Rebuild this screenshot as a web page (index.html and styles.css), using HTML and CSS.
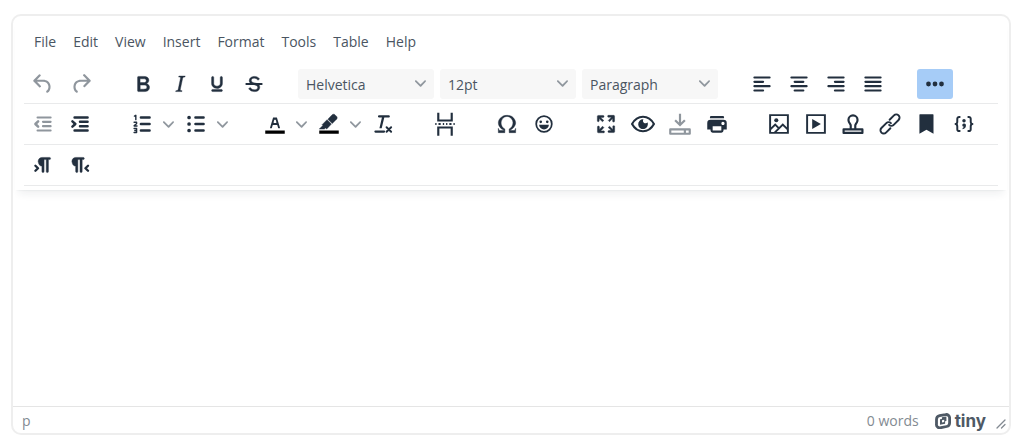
FILE: index.html
```html
<!DOCTYPE html>
<html lang="en">
<head>
<meta charset="utf-8">
<title>Rich text editor</title>
<link rel="stylesheet" href="styles.css">
</head>
<body>
<svg class="sprite" aria-hidden="true">
  <symbol id="chevron" viewBox="0 0 10 10"><path d="M8.7 2.2c.3-.3.8-.3 1 0 .4.4.4.9 0 1.2L5.7 7.8c-.3.3-.9.3-1.2 0L.2 3.4a.8.8 0 0 1 0-1.2c.3-.3.8-.3 1.1 0L5 6l3.7-3.8Z"/></symbol>
</svg>
<main class="editor">
  <header class="header">
    <nav class="menubar" aria-label="Menu">
      <button class="menu">File</button>
      <button class="menu">Edit</button>
      <button class="menu">View</button>
      <button class="menu">Insert</button>
      <button class="menu">Format</button>
      <button class="menu">Tools</button>
      <button class="menu">Table</button>
      <button class="menu">Help</button>
    </nav>

    <div class="toolbar toolbar-main" role="toolbar" aria-label="Formatting">
      <div class="group">
        <button class="tool" aria-label="Undo" disabled><svg class="icon" viewBox="0 0 24 24"><path d="M6.400 8H12c3.700 0 6.200 2 6.800 5.100.6 2.700-.4 5.600-2.300 6.800a1 1 0 0 1-1-1.800c1.100-.6 1.800-2.700 1.400-4.600-.5-2.100-2.100-3.500-4.900-3.500H6.400l3.300 3.300a1 1 0 1 1-1.400 1.400l-5-5a1 1 0 0 1 0-1.400l5-5a1 1 0 0 1 1.400 1.400L6.400 8Z"/></svg></button>
        <button class="tool" aria-label="Redo" disabled><svg class="icon" viewBox="0 0 24 24"><path d="M17.600 10H12c-2.800 0-4.400 1.400-4.900 3.500-.4 2 .3 4 1.400 4.600a1 1 0 1 1-1 1.800c-2-1.200-2.900-4.100-2.300-6.800.6-3 3-5.100 6.800-5.100h5.600l-3.300-3.300a1 1 0 1 1 1.400-1.400l5 5a1 1 0 0 1 0 1.400l-5 5a1 1 0 0 1-1.400-1.400l3.300-3.300Z"/></svg></button>
      </div>
      <div class="group">
        <button class="tool" aria-label="Bold"><svg class="icon" viewBox="0 0 24 24"><path class="heavy" fill-rule="evenodd" d="M7.8 19c-.3 0-.5 0-.6-.2l-.2-.5V5.7c0-.2 0-.4.2-.5l.6-.2h5c1.5 0 2.7.3 3.5 1 .7.6 1.1 1.4 1.1 2.5a3 3 0 0 1-.6 1.9c-.4.6-1 1-1.6 1.200.4.1.9.3 1.300.6s.8.7 1 1.200c.4.4.5 1 .5 1.600 0 1.300-.4 2.300-1.300 3-.8.7-2.100 1-3.800 1H7.800Zm5-8.300c.6 0 1.200-.1 1.600-.5.4-.3.6-.7.6-1.300 0-1.100-.8-1.700-2.300-1.700H9.300v3.500h3.400Zm.5 6c.7 0 1.300-.1 1.700-.4.4-.4.6-.9.6-1.500s-.2-1-.7-1.400c-.4-.3-1-.4-2-.4H9.400v3.800h4Z"/></svg></button>
        <button class="tool" aria-label="Italic"><svg class="icon" viewBox="0 0 24 24"><path class="heavy" d="m16.7 4.7-.1.9h-.3c-.6 0-1 0-1.4.3-.3.3-.4.6-.5 1.1l-2.1 9.800v.6c0 .5.4.8 1.400.8h.2l-.2.8H8l.2-.8h.2c1.100 0 1.800-.5 2-1.500l2-9.800.1-.5c0-.6-.4-.8-1.400-.8h-.3l.2-.9h5.800Z"/></svg></button>
        <button class="tool" aria-label="Underline"><svg class="icon" viewBox="0 0 24 24"><path class="heavy" d="M16 5c.6 0 1 .4 1 1v5.500a4 4 0 0 1-.4 1.800l-1 1.400a5.300 5.300 0 0 1-5.500 1 5 5 0 0 1-1.600-1c-.5-.4-.8-.9-1.100-1.400a4 4 0 0 1-.4-1.800V6c0-.6.4-1 1-1s1 .4 1 1v5.500c0 .3 0 .6.2 1l.6.7a3.300 3.300 0 0 0 2.200.8 3.400 3.400 0 0 0 2.200-.8c.3-.2.4-.5.6-.8l.2-.9V6c0-.6.4-1 1-1ZM8 17h8c.6 0 1 .4 1 1s-.4 1-1 1H8a1 1 0 0 1 0-2Z"/></svg></button>
        <button class="tool" aria-label="Strikethrough"><svg class="icon" viewBox="0 0 24 24"><path class="heavy" d="M15.600 8.500c-.5-.7-1-1.100-1.300-1.300-.6-.4-1.300-.6-2-.6-2.700 0-2.800 1.700-2.800 2.100 0 1.600 1.800 2 3.200 2.300 4.400.9 4.600 2.800 4.600 3.900 0 1.400-.7 4.100-5 4.100A6.200 6.200 0 0 1 7 16.400l1.500-1.100c.4.6 1.600 2 3.700 2 1.600 0 2.500-.4 3-1.200.4-.8.3-2-.8-2.600-.7-.4-1.600-.7-2.900-1-1-.2-3.900-.8-3.900-3.600C7.600 6 10.300 5 12.400 5c2.900 0 4.200 1.600 4.700 2.400l-1.500 1.100Z"/><path d="M5 11h14a1 1 0 0 1 0 2H5a1 1 0 0 1 0-2Z"/></svg></button>
      </div>
      <div class="group group-selects">
        <div class="picker"><select class="select" aria-label="Font"><option>Helvetica</option></select><svg class="chevron"><use href="#chevron"/></svg></div>
        <div class="picker"><select class="select" aria-label="Font size"><option>12pt</option></select><svg class="chevron"><use href="#chevron"/></svg></div>
        <div class="picker"><select class="select" aria-label="Block format"><option>Paragraph</option></select><svg class="chevron"><use href="#chevron"/></svg></div>
      </div>
      <div class="group">
        <button class="tool" aria-label="Align left"><svg class="icon line" viewBox="0 0 24 24"><path d="M5 6h14M5 10h8M5 14h14M5 18h8"/></svg></button>
        <button class="tool" aria-label="Align center"><svg class="icon line" viewBox="0 0 24 24"><path d="M5 6h14M8 10h8M5 14h14M8 18h8"/></svg></button>
        <button class="tool" aria-label="Align right"><svg class="icon line" viewBox="0 0 24 24"><path d="M5 6h14M11 10h8M5 14h14M11 18h8"/></svg></button>
        <button class="tool" aria-label="Justify"><svg class="icon line" viewBox="0 0 24 24"><path d="M5 6h14M5 10h14M5 14h14M5 18h14"/></svg></button>
      </div>
      <div class="group">
        <button class="tool tool-active" aria-label="More" aria-pressed="true"><svg class="icon" viewBox="0 0 24 24"><circle cx="6" cy="12" r="2.200"/><circle cx="12" cy="12" r="2.200"/><circle cx="18" cy="12" r="2.200"/></svg></button>
      </div>
    </div>

    <div class="toolbar" role="toolbar" aria-label="Insert and view">
      <div class="group">
        <button class="tool" aria-label="Decrease indent" disabled><svg class="icon line" viewBox="0 0 24 24"><path d="M7 6h12M12 10h7M12 14h7M7 18h12"/><path class="bold" d="M7.500 9.500 5 12l2.500 2.500"/></svg></button>
        <button class="tool" aria-label="Increase indent"><svg class="icon line" viewBox="0 0 24 24"><path class="bold" d="M7 6h12M12 10h7M12 14h7M7 18h12M5 9.500 7.700 12 5 14.500"/></svg></button>
      </div>
      <div class="group">
        <div class="split">
          <button class="tool" aria-label="Numbered list"><svg class="icon line" viewBox="0 0 24 24"><path class="bold" d="M11 6h8M11 12h8M11 18h8"/><path class="thin" d="M5 4.700 6.300 4v4M4.700 10.400H7v1.400l-2.200 1.600v.4h2.600M4.700 16.200H7v3.600H4.700M5.400 18H7"/></svg></button>
          <button class="split-arrow" aria-label="Numbered list styles"><svg class="chevron"><use href="#chevron"/></svg></button>
        </div>
        <div class="split">
          <button class="tool" aria-label="Bullet list"><svg class="icon line" viewBox="0 0 24 24"><path class="bold" d="M11.500 6H19M11.500 12H19M11.500 18H19"/><path class="solid" d="M3.900 6a1.700 1.700 0 1 1 3.400 0 1.700 1.700 0 0 1-3.400 0Zm0 6a1.700 1.700 0 1 1 3.400 0 1.700 1.700 0 0 1-3.400 0Zm0 6a1.700 1.700 0 1 1 3.400 0 1.700 1.700 0 0 1-3.400 0Z"/></svg></button>
          <button class="split-arrow" aria-label="Bullet list styles"><svg class="chevron"><use href="#chevron"/></svg></button>
        </div>
      </div>
      <div class="group">
        <div class="split">
          <button class="tool" aria-label="Text color"><svg class="icon" viewBox="0 0 24 24"><path class="swatch" d="M3 18h18v3H3z"/><path d="M8.700 16h-.8a.5.5 0 0 1-.5-.6l2.700-9c.1-.3.3-.4.5-.4h2.800c.2 0 .4.100.5.400l2.700 9a.5.5 0 0 1-.5.6h-.8a.5.5 0 0 1-.4-.4l-.7-2.200c0-.3-.3-.4-.5-.4h-3.400c-.2 0-.4.100-.5.400l-.7 2.200c0 .3-.2.400-.4.400Zm2.600-7.600-.6 2a.5.5 0 0 0 .5.600h1.600a.5.5 0 0 0 .5-.6l-.6-2c0-.3-.3-.4-.5-.4h-.4c-.2 0-.4.100-.5.400Z"/></svg></button>
          <button class="split-arrow" aria-label="Text color palette"><svg class="chevron"><use href="#chevron"/></svg></button>
        </div>
        <div class="split">
          <button class="tool" aria-label="Highlight color"><svg class="icon" viewBox="0 0 24 24"><path class="swatch" d="M3 18h18v3H3z"/><path class="heavy" d="M7.700 16.700H3l3.300-3.300-.7-.8L10.200 8l4 4.100-4 4.200c-.2.200-.6.200-.8 0l-.6-.7-1.100 1.100ZM11 7.500l3-3.100 1-1c.7-.6 1.800-.6 2.400 0l1.700 1.700c.6.700.6 1.700 0 2.400l-1.100 1.100-3 3-4-4.100Z"/></svg></button>
          <button class="split-arrow" aria-label="Highlight color palette"><svg class="chevron"><use href="#chevron"/></svg></button>
        </div>
        <button class="tool" aria-label="Clear formatting"><svg class="icon" viewBox="0 0 24 24"><path d="M13.200 6 10.800 16H8.700L11 6H8.200a1 1 0 1 1 .3-2h9a1 1 0 1 1-.3 2h-4ZM5 18h8a1 1 0 1 1 0 2H5a1 1 0 0 1 0-2Z"/><path d="m15.300 15 4.200 4.200M19.500 15l-4.200 4.200" fill="none" stroke="currentColor" stroke-width="1.800" stroke-linecap="round"/></svg></button>
      </div>
      <div class="group">
        <button class="tool" aria-label="Page break"><svg class="icon line square" viewBox="0 0 24 24"><path d="M5.800 1.500v7.300h12.400V1.500M5.800 22.800v-7.600h12.400v7.600"/><path class="medium" d="M3 12h1.200M6 12h2M10 12h1.200M13 12h1.200M16 12h2M19.800 12H21"/></svg></button>
      </div>
      <div class="group">
        <button class="tool" aria-label="Special character"><svg class="icon" viewBox="0 0 24 24"><path class="heavy" d="M15 18h4l1-2v4h-6v-3.300l1.400-1a6 6 0 0 0 1.800-2.900 6.300 6.300 0 0 0-.1-4.100 5.800 5.800 0 0 0-3-3.200c-.6-.3-1.300-.5-2.100-.5a5.100 5.100 0 0 0-3.900 1.800 6.300 6.300 0 0 0-1.300 6 6.200 6.200 0 0 0 1.800 3l1.400.9V20H4v-4l1 2h4v-.5l-2-1L5.400 15A6.500 6.500 0 0 1 4 11c0-1 .2-1.900.6-2.700A7 7 0 0 1 7.800 5C9 4.300 10.500 4 12 4a7.900 7.900 0 0 1 7.300 4.300A6.500 6.500 0 0 1 20 11a6 6 0 0 1-.8 2.700A7 7 0 0 1 16 17l-1 .5v.5Z"/></svg></button>
        <button class="tool" aria-label="Emojis"><svg class="icon" viewBox="0 0 24 24"><circle cx="12" cy="12" r="7.200" fill="none" stroke="currentColor" stroke-width="1.600"/><circle cx="9" cy="10" r="1.200"/><circle cx="15" cy="10" r="1.200"/><path d="M7.500 12.600h9a4.500 4.500 0 0 1-9 0Z"/></svg></button>
      </div>
      <div class="group">
        <button class="tool" aria-label="Fullscreen"><svg class="icon" viewBox="0 0 24 24"><path class="heavy" d="m15.300 10-1.200-1.300 2.900-3h-2.300a.9.9 0 1 1 0-1.700H19c.5 0 .9.400.9.900v4.400a.9.9 0 1 1-1.800 0V7l-2.900 3Zm0 4 3 3v-2.300a.9.9 0 1 1 1.700 0V19c0 .5-.4.900-.9.900h-4.400a.9.9 0 1 1 0-1.800H17l-3-2.900 1.300-1.200ZM10 15.400l-2.900 3h2.300a.9.9 0 1 1 0 1.700H5a.9.9 0 0 1-.9-.9v-4.400a.9.9 0 1 1 1.800 0V17l2.900-3 1.200 1.300ZM8.700 10 5.700 7v2.300a.9.9 0 0 1-1.700 0V5c0-.5.400-.9.900-.9h4.400a.9.9 0 0 1 0 1.800H7l3 2.900L8.700 10Z"/></svg></button>
        <button class="tool" aria-label="Preview"><svg class="icon" viewBox="0 0 24 24"><path d="M1.900 12C4.200 7.800 7.700 5.300 12 5.300s7.800 2.500 10.100 6.700c-2.300 4.200-5.800 6.700-10.100 6.700S4.200 16.200 1.900 12Z" fill="none" stroke="currentColor" stroke-width="2" stroke-linejoin="round"/><path d="M12.400 7.700c-1 1.300-.4 3.200 1.100 3.600 1.100.3 2.200-.2 2.700-.9a4.500 4.500 0 1 1-3.800-2.700Z"/></svg></button>
        <button class="tool" aria-label="Save" disabled><svg class="icon line square" viewBox="0 0 24 24"><path d="M12 2.500v10M7.500 8.500l4.500 4.500 4.500-4.500"/><path stroke-linejoin="round" d="M3 17h18v4H3zM16.500 17v4"/></svg></button>
        <button class="tool" aria-label="Print"><svg class="icon" viewBox="0 0 24 24"><path fill-rule="evenodd" d="M18 8H6a3 3 0 0 0-3 3v6h3v1a2 2 0 0 0 2 2h8a2 2 0 0 0 2-2v-1h3v-6a3 3 0 0 0-3-3Zm-2 10H8v-4h8v4Zm1.500-5c-.8 0-1.500-.7-1.500-1.500s.7-1.500 1.500-1.500 1.500.7 1.500 1.500-.7 1.500-1.500 1.500ZM17.500 4.500h-11a1 1 0 0 0-1 1v1.300h13V5.500a1 1 0 0 0-1-1Z"/></svg></button>
      </div>
      <div class="group">
        <button class="tool" aria-label="Image"><svg class="icon line square" viewBox="0 0 24 24"><path class="medium" d="M3.800 3.800h16.400v16.400H3.800zM4 17l4.500-4.500L12 16m-4 4 7.500-7.500L20 17"/><circle class="dot" cx="9.500" cy="8.500" r="1.900"/></svg></button>
        <button class="tool" aria-label="Media"><svg class="icon line square" viewBox="0 0 24 24"><path class="medium" d="M3.800 3.800h16.400v16.400H3.800z"/><path class="solid" d="m8.500 7.300 8 4.700-8 4.700z"/></svg></button>
        <button class="tool" aria-label="Template"><svg class="icon line square" viewBox="0 0 24 24"><path stroke-linejoin="round" d="M3.300 17h17.400v3.200H3.300z"/><path d="M9.900 16.500v-3.200c0-1.200-2.100-2.500-2.100-5a4.200 4.200 0 0 1 8.400 0c0 2.500-2.100 3.800-2.100 5v3.200"/></svg></button>
        <button class="tool" aria-label="Link"><svg class="icon line" viewBox="0 0 24 24"><g class="medium" transform="rotate(-45 12 12)"><path d="M9.500 15H3.800a3 3 0 0 1 0-6h6.400a3 3 0 0 1 3 3"/><path d="M14.500 9h5.700a3 3 0 0 1 0 6h-6.400a3 3 0 0 1-3-3"/></g></svg></button>
        <button class="tool" aria-label="Anchor"><svg class="icon" viewBox="0 0 24 24"><path d="M5.500 3h12c.300 0 .5.200.5.500V21l-6.500-3.800L5 21V3.500c0-.3.200-.5.5-.5Z"/></svg></button>
        <button class="tool" aria-label="Code sample"><svg class="icon line" viewBox="0 0 24 24"><path class="medium" d="M8 5.500h-.5A1.700 1.700 0 0 0 5.800 7.200v2.500c0 1.300-.6 2.300-1.600 2.300 1 0 1.600 1 1.600 2.300v2.500a1.700 1.700 0 0 0 1.700 1.700H8M16 5.500h.5a1.700 1.700 0 0 1 1.700 1.700v2.500c0 1.300.6 2.300 1.600 2.300-1 0-1.600 1-1.600 2.300v2.500a1.700 1.700 0 0 1-1.700 1.700H16"/><circle class="dot" cx="12" cy="9" r="1.600"/><path class="solid" d="M12 11.500a1.700 1.700 0 0 1 1.800 1.800c0 2-1.200 3.200-3.100 3.500v-1.200c.6-.2 1-.6 1.100-1.100a1.500 1.500 0 0 1 .2-3Z"/></svg></button>
      </div>
    </div>

    <div class="toolbar" role="toolbar" aria-label="Direction">
      <div class="group">
        <button class="tool" aria-label="Left to right"><svg class="icon" viewBox="0 0 24 24"><path class="heavy" d="M11 5h7a1 1 0 0 1 0 2h-1v11a1 1 0 0 1-2 0V7h-2v11a1 1 0 0 1-2 0v-5c-.5 0-1 0-1.400-.3A3.400 3.400 0 0 1 7.800 10a3.300 3.300 0 0 1 0-2.800 3.400 3.400 0 0 1 1.800-1.800L11 5Z"/><path d="m5 12.700 2.400 2.300L5 17.300" fill="none" stroke="currentColor" stroke-width="2.200" stroke-linecap="round" stroke-linejoin="round"/></svg></button>
        <button class="tool" aria-label="Right to left"><svg class="icon" viewBox="0 0 24 24"><path class="heavy" d="M8 5h7a1 1 0 0 1 0 2h-1v11a1 1 0 0 1-2 0V7h-2v11a1 1 0 0 1-2 0v-5c-.5 0-1 0-1.400-.3A3.400 3.400 0 0 1 4.800 10a3.300 3.300 0 0 1 0-2.800 3.400 3.400 0 0 1 1.800-1.800L8 5Z"/><path d="M19.400 12.700 17 15l2.400 2.300" fill="none" stroke="currentColor" stroke-width="2.200" stroke-linecap="round" stroke-linejoin="round"/></svg></button>
      </div>
    </div>
  </header>

  <section class="content" contenteditable="true" role="textbox" aria-multiline="true" aria-label="Document"></section>

  <footer class="statusbar">
    <span class="path">p</span>
    <button class="wordcount">0 words</button>
    <a class="brand" href="#" aria-label="tiny"><svg class="brand-mark" viewBox="0 0 16 16"><path d="M6 2.400 10.600 1.600A3.300 3.300 0 0 1 14.600 5v5a3.600 3.600 0 0 1-2.900 3.500l-5.600 1.100A3.300 3.300 0 0 1 1.500 11V6.500A3.900 3.900 0 0 1 4.600 2.700Z" fill="none" stroke="currentColor" stroke-width="2.800"/><path fill-rule="evenodd" d="m5 6.300 1.900-.4V4.200l4.500-.8V8l-1.300.3v2.400l-5.100 1Zm2 .9v2.300l2.200-.5V6.700Z"/></svg><span class="brand-name">tiny</span></a>
    <svg class="resize" viewBox="0 0 10 10" aria-hidden="true"><path d="M1 9 9 1M5.500 9 9 5.500"/></svg>
  </footer>
</main>
</body>
</html>
```
FILE: styles.css
```css
* { box-sizing: border-box; }

body {
  margin: 0;
  padding: 14px 13px 6px 11px;
  height: 100vh;
  background: #fff;
  color: #222f3e;
  font-family: "Open Sans", "Noto Sans", sans-serif;
  font-size: 14px;
  line-height: 20px;
}

button, select {
  margin: 0;
  padding: 0;
  border: 0;
  background: none;
  color: inherit;
  font: inherit;
}

.sprite { display: none; }

.editor {
  display: flex;
  flex-direction: column;
  height: 100%;
  border: 2px solid #eee;
  border-radius: 10px;
  overflow: hidden;
}

.header {
  margin: 0 2px;
  padding: 10px 9px 4px;
  box-shadow: 0 2px 2px -2px rgba(34, 47, 62, .1), 0 8px 8px -4px rgba(34, 47, 62, .07);
}

.menubar {
  display: flex;
  gap: 1px;
  padding: 0 2px;
  margin-bottom: 8px;
}

.menu {
  height: 30px;
  padding: 1px 8px 0;
  color: #4a5562;
}

.toolbar {
  display: flex;
  align-items: center;
  gap: 26px;
  height: 41px;
  padding-left: 1px;
  border-bottom: 1px solid #e9eaeb;
}

.toolbar-main { height: 40px; }

.group {
  display: flex;
  align-items: center;
  gap: 1px;
}

.toolbar-main .group:first-child { gap: 2px; }

.toolbar-main .group-selects { gap: 6px; }

.tool {
  display: flex;
  align-items: center;
  justify-content: center;
  width: 36px;
  height: 30px;
  border-radius: 3px;
}

.tool:disabled { color: #222f3e; opacity: .5; }

.tool-active { background: #a6ccf7; }

.icon {
  width: 26px;
  height: 26px;
  fill: currentColor;
}

.line {
  fill: none;
  stroke: currentColor;
  stroke-width: 2;
  stroke-linecap: round;
  stroke-linejoin: round;
}

.square { stroke-linecap: butt; stroke-linejoin: miter; }
.thin { stroke-width: 1.3; }
.medium { stroke-width: 1.8; }
.bold { stroke-width: 2.3; }
.heavy { stroke: currentColor; stroke-width: .4; }
.solid, .dot { fill: currentColor; stroke: none; }
.swatch { fill: #000; }

.split { display: flex; }

.split-arrow {
  display: flex;
  align-items: center;
  justify-content: center;
  width: 17px;
  height: 30px;
}

.chevron {
  width: 11px;
  height: 11px;
  fill: #90979e;
}

.picker {
  display: grid;
  grid-template-columns: 1fr 19px;
  align-items: center;
  width: 136px;
  height: 30px;
  border-radius: 3px;
  background: #f7f7f7;
}

.select {
  grid-area: 1 / 1 / 2 / 3;
  height: 30px;
  padding: 3px 24px 0 8px;
  appearance: none;
  color: #4a5562;
}

.picker .chevron {
  grid-area: 1 / 2;
  pointer-events: none;
}

.content { flex: 1; outline: 0; }

.statusbar {
  display: flex;
  align-items: center;
  height: 27px;
  padding: 2px 3px 0 9px;
  border-top: 1px solid #e5e5e5;
  color: #838a92;
}

.path { flex: 1; }

.brand {
  display: flex;
  align-items: center;
  gap: 4px;
  margin: 0 10px 0 16px;
  color: #4e5965;
  text-decoration: none;
}

.brand-mark {
  width: 16px;
  height: 16px;
  fill: currentColor;
}

.brand-name {
  font-family: Inter, sans-serif;
  font-size: 17px;
  font-weight: 700;
}

.resize {
  align-self: flex-end;
  width: 10px;
  height: 10px;
  margin-bottom: 4px;
  fill: none;
  stroke: #838a92;
  stroke-width: 1.3;
  stroke-linecap: round;
}
```
